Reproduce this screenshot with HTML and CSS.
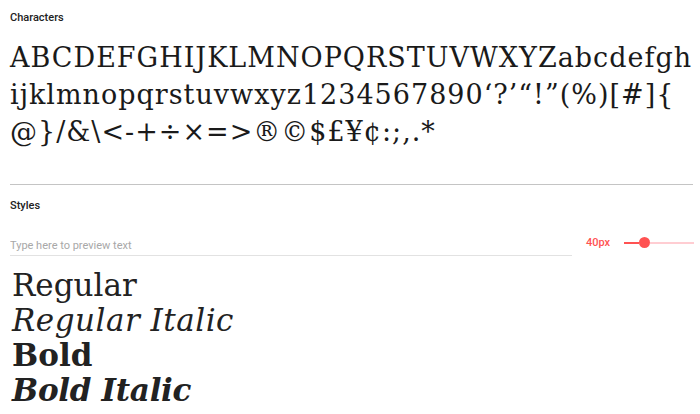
FILE: index.html
```html
<!DOCTYPE html>
<html lang="en">
<head>
    <meta charset="UTF-8">
    <meta name="viewport" content="width=device-width, initial-scale=1.0">
    <title>Arvo specimen</title>
    <link rel="stylesheet" href="styles.css">
</head>
<body>

    <section class="characters">
        <h4 class="label">Characters</h4>
        <div class="glyphs">
            <span class="glyph-line">ABCDEFGHIJKLMNOPQRSTUVWXYZabcdefgh</span>
            <span class="glyph-line">ijklmnopqrstuvwxyz1234567890‘?’“!”(%)[#]{</span>
            <span class="glyph-line">@}/&amp;\&lt;-+÷×=&gt;®©$£¥¢:;,.*</span>
        </div>
    </section>

    <hr class="divider">

    <section class="styles">
        <h4 class="label">Styles</h4>
        <div class="controls">
            <input type="text" class="preview-input" placeholder="Type here to preview text">
            <span class="size">40px</span>
            <div class="slider">
                <span class="track-on"></span>
                <span class="thumb"></span>
                <span class="track-off"></span>
            </div>
        </div>

        <div class="samples">
            <div class="sample">Regular</div>
            <div class="sample italic">Regular Italic</div>
            <div class="sample bold">Bold</div>
            <div class="sample bold italic">Bold Italic</div>
        </div>
    </section>

</body>
</html>
```

FILE: styles.css
```css
body {
    font-family: Roboto, "Liberation Sans", sans-serif;
    background-color: white;
    color: #222;
    margin: 0;
    padding: 0 7px 0 10px;
    overflow: hidden;
}

.label {
    font-size: 11px;
    font-weight: 500;
    margin: 0;
    line-height: 14px;
}

.characters .label {
    padding-top: 11px;
}

.glyphs {
    font-family: "DejaVu Serif", serif;
    font-size: 27px;
    line-height: 37px;
    letter-spacing: 1px;
    margin-top: 14px;
    color: #1a1a1a;
}

.glyph-line {
    display: block;
    white-space: nowrap;
}

.divider {
    border: none;
    border-top: 1px solid #c4c4c4;
    margin: 34px 0 0 0;
}

.styles .label {
    margin-top: 14px;
}

.controls {
    display: flex;
    align-items: center;
    margin-top: 24px;
}

.preview-input {
    flex: 0 0 562px;
    border: none;
    border-bottom: 1px solid #e2e2e2;
    padding: 2px 0 3px 0;
    font-family: Roboto, sans-serif;
    font-size: 11px;
    outline: none;
}

.preview-input::placeholder {
    color: #a8a8a8;
}

.size {
    color: #ff5252;
    font-size: 11px;
    font-weight: 500;
    margin-left: 14px;
    margin-top: -8px;
}

.slider {
    display: flex;
    align-items: center;
    margin-left: 14px;
    margin-top: -8px;
}

.track-on {
    width: 15px;
    height: 2px;
    background: #ff5252;
}

.thumb {
    width: 11px;
    height: 11px;
    border-radius: 50%;
    background: #ff5252;
}

.track-off {
    width: 44px;
    height: 2px;
    background: #ffcdd2;
}

.samples {
    margin-top: 12px;
    padding-left: 2px;
}

.sample {
    font-family: "DejaVu Serif", serif;
    font-size: 31px;
    line-height: 35px;
    color: #222;
}

.italic {
    font-style: italic;
    letter-spacing: 0.5px;
}

.bold {
    font-weight: bold;
}

.bold.italic {
    letter-spacing: -0.3px;
}
```
